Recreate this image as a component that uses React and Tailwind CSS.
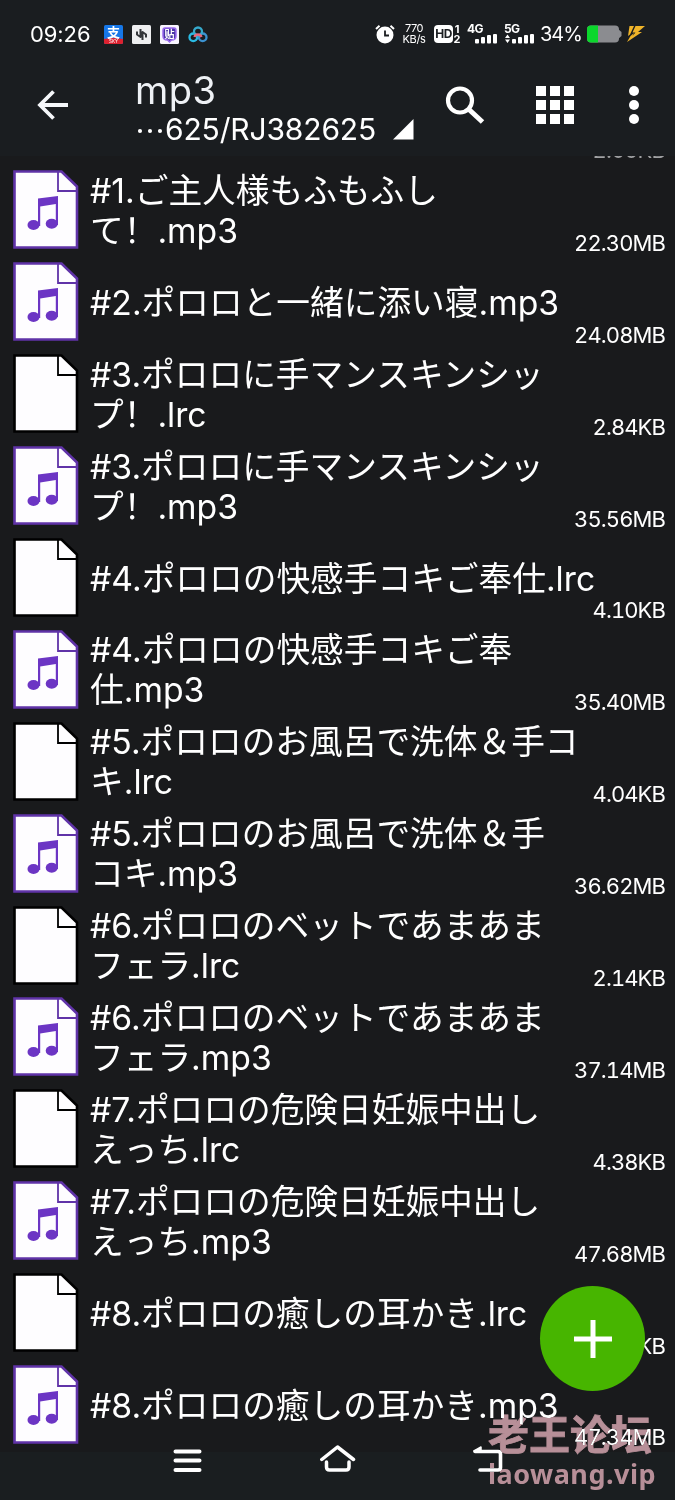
const files = [
  { lines: ["#1.ご主人様もふもふし", "て！.mp3"], size: "22.30MB" },
  { lines: ["#2.ポロロと一緒に添い寝.mp3"], size: "24.08MB" },
  { lines: ["#3.ポロロに手マンスキンシッ", "プ！.lrc"], size: "2.84KB" },
  { lines: ["#3.ポロロに手マンスキンシッ", "プ！.mp3"], size: "35.56MB" },
  { lines: ["#4.ポロロの快感手コキご奉仕.lrc"], size: "4.10KB" },
  { lines: ["#4.ポロロの快感手コキご奉", "仕.mp3"], size: "35.40MB" },
  { lines: ["#5.ポロロのお風呂で洗体＆手コ", "キ.lrc"], size: "4.04KB" },
  { lines: ["#5.ポロロのお風呂で洗体＆手", "コキ.mp3"], size: "36.62MB" },
  { lines: ["#6.ポロロのベットであまあま", "フェラ.lrc"], size: "2.14KB" },
  { lines: ["#6.ポロロのベットであまあま", "フェラ.mp3"], size: "37.14MB" },
  { lines: ["#7.ポロロの危険日妊娠中出し", "えっち.lrc"], size: "4.38KB" },
  { lines: ["#7.ポロロの危険日妊娠中出し", "えっち.mp3"], size: "47.68MB" },
  { lines: ["#8.ポロロの癒しの耳かき.lrc"], size: "3.15KB" },
  { lines: ["#8.ポロロの癒しの耳かき.mp3"], size: "47.34MB" },
];

const FileIcon = ({ music }) => {
  const color = music ? "#6033a8" : "#000000";
  return (
    <svg width="66" height="80" viewBox="0 0 66 80" className="mt-[3px] shrink-0">
      <path
        d="M1.500 1.500H48.500L64 16.500V77.500H1.500Z"
        fill="#fefdff"
        stroke={color}
        strokeWidth="2.600"
      />
      <path d="M45 1.500V21H64" fill="none" stroke={color} strokeWidth="1.800" />
      {music && (
        <g fill="#6c35c4">
          <path d="M25 28.500L45 26V55H42.800V34L27.200 36.500V56H25Z" />
          <ellipse cx="20.500" cy="55" rx="6" ry="5" />
          <ellipse cx="38.700" cy="53.700" rx="6" ry="5" />
        </g>
      )}
    </svg>
  );
};

const Signal = ({ label, arrows }) => (
  <div className="flex h-[20px] w-[31px] flex-col">
    <span className="text-[12px] leading-[10px] font-bold tracking-[-0.6px]">
      {label}
    </span>
    <svg width="31" height="10" viewBox="0 0 31 10" fill="#fff">
      {arrows && <path d="M1 4L3.500 0.500L6 4ZM1 5.500H6L3.500 9Z" />}
      <rect x="8" y="5" width="4" height="4.500" rx="1" />
      <rect x="14" y="3" width="4" height="6.500" rx="1" />
      <rect x="20" y="1" width="4" height="8.500" rx="1" />
      <rect x="26" y="0" width="4" height="9.500" rx="1" />
    </svg>
  </div>
);

const StatusBar = () => (
  <div className="flex h-[68px] shrink-0 items-center pl-[30px]">
    <span className="w-[74px] text-[22px] tracking-[-0.1px]">09:26</span>
    <div className="flex gap-[9px]">
      <svg width="19" height="19" viewBox="0 0 19 19">
        <rect width="19" height="19" rx="1.500" fill="#1677e8" />
        <path d="M0 14Q9 12 19 14V17.500Q19 19 17.500 19H1.500Q0 19 0 17.500Z" fill="#dc2230" />
        <text x="9.500" y="12" fontSize="13" fontWeight="bold" textAnchor="middle" fill="#fff" fontFamily="Noto Sans CJK SC, sans-serif">支</text>
        <text x="9.500" y="18" fontSize="4.500" textAnchor="middle" fill="#fff">SKY</text>
      </svg>
      <svg width="19" height="19" viewBox="0 0 19 19">
        <rect width="19" height="19" rx="1.500" fill="#eeeff1" />
        <path d="M8.500 4V12L5 9.500V6.500M10.500 15V7L14 9.500V12.500" fill="none" stroke="#33363a" strokeWidth="2" strokeLinejoin="round" />
      </svg>
      <svg width="19" height="19" viewBox="0 0 19 19">
        <rect width="19" height="19" rx="1.500" fill="#f8f5ff" />
        <path d="M5 3H14Q16 3 16 5.500V11Q16 15 11.500 15L9.500 17L7.500 15Q3 15 3 11V5.500Q3 3 5 3Z" fill="#4a35a8" stroke="#9b69ee" strokeWidth="1.500" />
        <text x="9.500" y="12.800" fontSize="10" fontWeight="bold" textAnchor="middle" fill="#fff" fontFamily="Noto Sans CJK SC, sans-serif">贴</text>
      </svg>
      <svg width="20" height="19" viewBox="0 0 20 19" fill="none" strokeWidth="2.300">
        <circle cx="5.300" cy="12.300" r="3.800" stroke="#2abbe4" />
        <circle cx="14.700" cy="12.300" r="3.800" stroke="#3c92d0" />
        <circle cx="10" cy="6.500" r="4" stroke="#36aacd" />
        <path d="M6.500 12Q7 9.500 10 9.500Q12.500 9.500 13.500 12" stroke="#e5687b" />
      </svg>
    </div>
    <svg width="20" height="20" viewBox="0 0 20 20" className="ml-[167px]">
      <circle cx="10" cy="11" r="8.500" fill="#fff" />
      <path d="M1 5L4.500 1.800M19 5L15.500 1.800" stroke="#fff" strokeWidth="2" />
      <path d="M10 6.500V11.500H14" fill="none" stroke="#1a1d20" strokeWidth="1.800" />
    </svg>
    <div className="ml-[7px] w-[24px] text-center text-[11px] leading-[11px] tracking-[-0.4px] whitespace-nowrap">
      <div>770</div>
      <div>KB/s</div>
    </div>
    <div className="ml-[8px] flex h-[18px] w-[19px] items-center justify-center rounded-[4px] bg-white text-[12px] font-bold tracking-[-0.6px] text-[#1a1d20]">
      HD
    </div>
    <div className="w-[8px] text-center text-[11px] leading-[10px] font-bold">
      <div>1</div>
      <div>2</div>
    </div>
    <div className="ml-[6px] flex gap-[6px]">
      <Signal label="4G" />
      <Signal label="5G" arrows />
    </div>
    <span className="ml-[5px] w-[42px] text-[20px] tracking-[-1px]">34%</span>
    <svg width="35" height="18" viewBox="0 0 35 18" className="ml-[5px]">
      <rect width="32" height="17" y="0.500" rx="4" fill="#8b8c90" />
      <path d="M31 4L34.500 7V11L31 14Z" fill="#8b8c90" />
      <path d="M11 0.500V17.500H4Q0 17.500 0 13.500V4.500Q0 0.500 4 0.500Z" fill="#0bd72c" />
    </svg>
    <svg width="20" height="18" viewBox="0 0 20 18" className="ml-[4px]" fill="#f0b429">
      <path d="M3.500 1H8L4 9.500L2 11ZM9.500 1H19L12 7H16L1 17L4.500 11L8 8L6.500 11L9.500 7.500L6.500 7.500Z" />
    </svg>
  </div>
);

const Header = () => (
  <div className="flex h-[88px] shrink-0">
    <svg width="34" height="34" viewBox="0 0 34 34" className="mt-[20px] ml-[36px] shrink-0" fill="none" stroke="#f5f7fa" strokeWidth="3.800">
      <path d="M32 17H4M17.500 3.500L4 17L17.500 30.500" />
    </svg>
    <div className="ml-[65px] w-[242px] whitespace-nowrap">
      <div className="pt-[2px] text-[38px] leading-[40px] tracking-[0.5px] text-[#eef1f5]">mp3</div>
      <div className="flex">
        <span className="w-[30px] font-['Noto_Sans_CJK_SC',sans-serif] text-[30px] leading-[38px]">⋯</span>
        <span className="text-[30px] leading-[38px] tracking-[-0.15px]">625/RJ382625</span>
      </div>
    </div>
    <svg width="21" height="21" viewBox="0 0 21 21" className="mt-[51px] ml-[16px]" fill="#fff">
      <path d="M20.500 0V20.500H0Z" />
    </svg>
    <svg width="40" height="40" viewBox="0 0 40 40" className="mt-[17px] ml-[31px]" fill="none" stroke="#fff">
      <circle cx="15" cy="15.500" r="12" strokeWidth="4.200" />
      <path d="M24 24.500L37.500 37" strokeWidth="5" />
    </svg>
    <div className="mt-[18px] ml-[51px] grid h-[38px] w-[38px] grid-cols-3 gap-[4px]">
      {Array.from({ length: 9 }).map((_, i) => (
        <span key={i} className="bg-white" />
      ))}
    </div>
    <div className="mt-[18px] ml-[55px] flex w-[10px] flex-col gap-[4px]">
      <span className="h-[10px] w-[10px] rounded-full bg-white" />
      <span className="h-[10px] w-[10px] rounded-full bg-white" />
      <span className="h-[10px] w-[10px] rounded-full bg-white" />
    </div>
  </div>
);

const FileRow = ({ file }) => (
  <div className="flex h-[91.9px] shrink-0 items-center pl-[12.5px]">
    <FileIcon music={file.lines.join("").endsWith(".mp3")} />
    <div className="ml-[11.5px] min-w-0 flex-1 pt-[4px] text-[33.7px] leading-[40px] whitespace-nowrap">
      {file.lines.map((line) => (
        <div key={line}>{line}</div>
      ))}
    </div>
    <span className="mr-[10px] self-end text-[22px] leading-[24px] tracking-[-0.9px] tabular-nums">
      {file.size}
    </span>
  </div>
);

const NavBar = () => (
  <div className="flex h-[48px] shrink-0 bg-[#1a1e20]">
    <svg width="30" height="28" viewBox="0 0 30 28" className="mt-[-4px] ml-[173px]" stroke="#fff" strokeWidth="4" strokeLinecap="round">
      <path d="M2.500 3.500H26.500M2.500 12.500H26.500M2.500 22H26.500" />
    </svg>
    <svg width="36" height="30" viewBox="0 0 36 30" className="mt-[-8px] ml-[117px]" fill="none" stroke="#fff" strokeWidth="3.500" strokeLinecap="round" strokeLinejoin="round">
      <path d="M1.800 15.500L17.500 3L33.500 15.500" />
      <path d="M6.500 18V23Q6.500 26 9.500 26H26Q29 26 29 23V18" />
    </svg>
    <svg width="32" height="30" viewBox="0 0 32 30" className="mt-[-8px] ml-[116px]" fill="none" stroke="#fff" strokeWidth="3.600" strokeLinecap="round" strokeLinejoin="round">
      <path d="M3 7.500H26Q28.500 7.500 28.500 10V23.500Q28.500 26 26 26H8" />
      <path d="M2 7L9 3V7.500Z" strokeWidth="1.500" fill="#fff" />
    </svg>
  </div>
);

const App = () => {
  return (
    <div className="relative flex h-[1500px] w-[675px] flex-col overflow-hidden bg-[#1a1d20] font-['Inter','Noto_Sans_CJK_SC',sans-serif] text-white">
      <StatusBar />
      <Header />
      <div className="flex h-[1296px] shrink-0 flex-col overflow-hidden bg-[#191a1c]">
        {/* tail of the row scrolled under the header */}
        <div className="flex h-[7px] shrink-0 items-end justify-end overflow-hidden pr-[10px]">
          <span className="text-[22px] leading-[25px] tracking-[-0.9px] text-[#a0a1a3] tabular-nums">
            2.60KB
          </span>
        </div>
        {files.map((file) => (
          <FileRow key={file.lines.join("")} file={file} />
        ))}
      </div>
      <NavBar />

      <button className="absolute top-[1286px] left-[540px] flex h-[105px] w-[105px] items-center justify-center rounded-full bg-[#47b500]">
        <svg width="38" height="38" viewBox="0 0 38 38" stroke="#fff" strokeWidth="5">
          <path d="M19 0V38M0 19H38" />
        </svg>
      </button>

      <div className="absolute top-[1407px] left-[488px] whitespace-nowrap text-[#b78f98] mix-blend-lighten">
        <div className="font-['Noto_Sans_CJK_SC',sans-serif] text-[41px] leading-[50px] font-bold [-webkit-text-stroke:0.8px_#b78f98]">
          老王论坛
        </div>
        <div className="font-['Noto_Sans',sans-serif] text-[27px] leading-[34px] font-bold tracking-[0.5px]">
          laowang.vip
        </div>
      </div>
    </div>
  );
};

export default App;
